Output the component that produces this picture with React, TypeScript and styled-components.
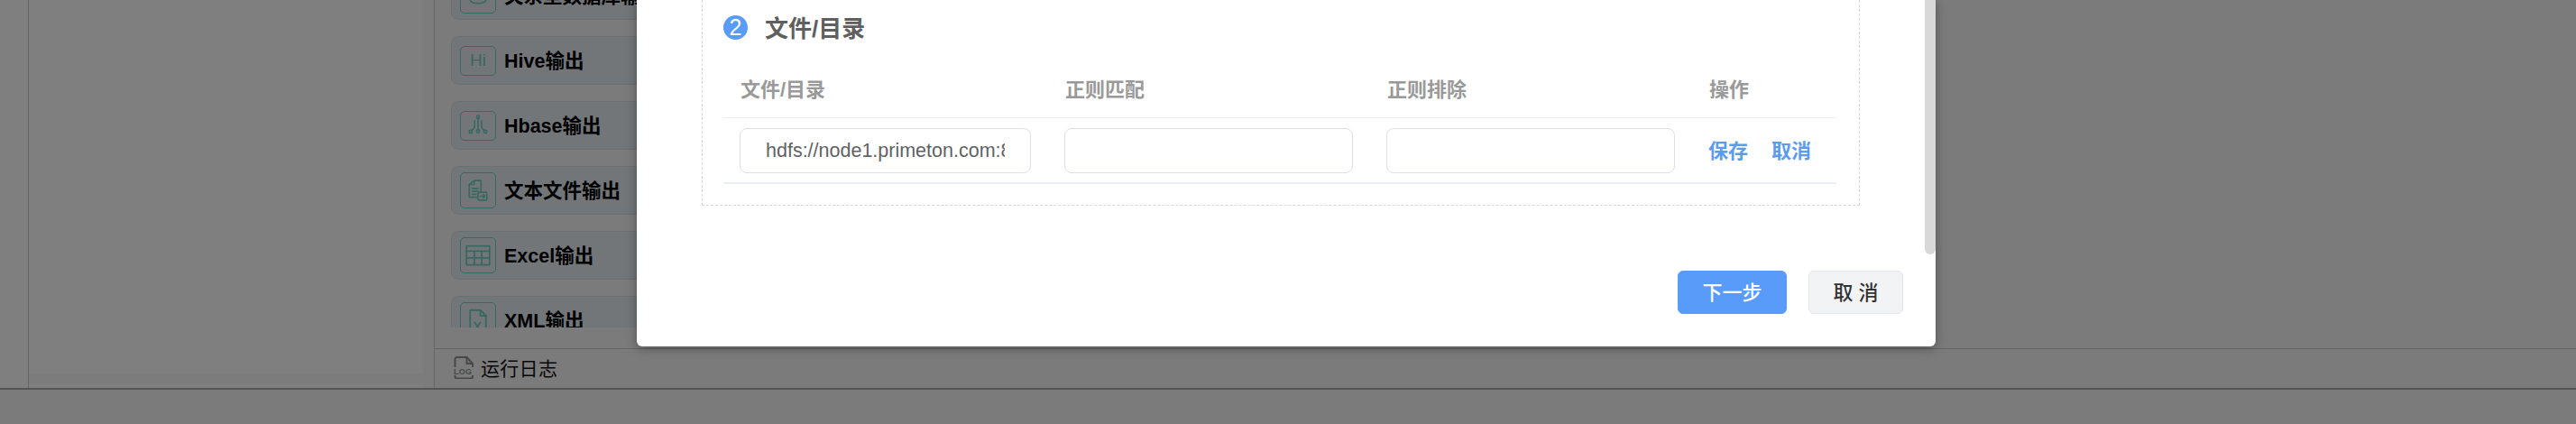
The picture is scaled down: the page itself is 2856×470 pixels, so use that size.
import React from 'react';
import styled, { createGlobalStyle } from 'styled-components';

const GlobalStyle = createGlobalStyle`
  html, body {
    margin: 0;
    padding: 0;
    background: #f6f6f6;
  }

  * {
    box-sizing: border-box;
  }
`;

const FONT = `"Liberation Sans", "Noto Sans CJK SC", sans-serif`;

const Page = styled.div`
  position: relative;
  width: 2856px;
  height: 470px;
  overflow: hidden;
  font-family: ${FONT};
  display: flex;
  flex-direction: column;
`;

const Workspace = styled.div`
  height: 432px;
  flex: none;
  display: flex;
  border-bottom: 2px solid #a8a8a8;
`;

const Rail = styled.div`
  width: 32px;
  background: #ffffff;
  border-right: 1px solid #c8c8c8;
`;

const TreePanel = styled.div`
  width: 449px;
  display: flex;
  flex-direction: column;
  background: #fefefe;
  border-right: 12px solid #f8f8f8;
  padding-top: 414px;
`;

const TreeFooter = styled.div`
  height: 12px;
  background: #f8f8f8;
`;

const Designer = styled.div`
  flex: 1;
  display: flex;
  flex-direction: column;
  background: #f6f6f8;
  border-left: 1px solid #cccccc;
`;

const NodeArea = styled.div`
  height: 386px;
  flex: none;
  padding-left: 18px;
`;

const NodeList = styled.div`
  height: 363px;
  overflow: hidden;
`;

const NodeStack = styled.div`
  margin-top: -32px;
  display: flex;
  flex-direction: column;
  gap: 18px;
`;

const NodeCard = styled.div`
  width: 400px;
  height: 54px;
  flex: none;
  display: flex;
  align-items: center;
  gap: 9px;
  padding-left: 9px;
  background: #e6edf3;
  border: 1px solid #dbe1e7;
  border-radius: 8px;
  color: #000;
  font-size: 21.5px;
  font-weight: 700;
  white-space: nowrap;
`;

const NodeName = styled.span`
  padding-bottom: 3px;
`;

const NodeIcon = styled.div<{ $short?: boolean }>`
  width: 40px;
  height: ${(p) => (p.$short ? '33px' : '40px')};
  flex: none;
  display: flex;
  align-items: center;
  justify-content: center;
  border: 1.5px solid #70d0c0;
  border-radius: 5px;
  color: #70d0c0;
  font-size: 19px;
  font-weight: 400;
`;

const LogBar = styled.div`
  flex: 1;
  display: flex;
  align-items: center;
  gap: 8px;
  padding-left: 21px;
  padding-bottom: 3px;
  border-top: 1px solid #c8c8c8;
  font-size: 21px;
  letter-spacing: 0.3px;
  color: #111;
`;

const BottomBar = styled.div`
  flex: 1;
  background: #f6f6f6;
`;

const Overlay = styled.div`
  position: absolute;
  inset: 0;
  background: rgba(0, 0, 0, 0.5);
`;

const Dialog = styled.div`
  position: absolute;
  left: 706px;
  top: 0;
  width: 1440px;
  height: 384px;
  background: #fff;
  border-radius: 0 0 6px 6px;
  box-shadow: 0 2px 12px rgba(0, 0, 0, 0.35);
  padding: 0 36px 0 72px;
`;

const ScrollThumb = styled.div`
  position: absolute;
  top: 0;
  right: 0;
  width: 12px;
  height: 282px;
  background: #d8d8d8;
  border-radius: 0 0 6px 6px;
`;

const Section = styled.div`
  width: 1284px;
  height: 228px;
  padding: 17px 25px 0 23px;
  border: 1px dashed #d4d7dc;
  border-top: none;
`;

const SectionTitle = styled.div`
  display: flex;
  align-items: center;
  gap: 19px;
  height: 27px;
  font-size: 26px;
  font-weight: 700;
  color: #5f5f5f;
`;

const TitleText = styled.span`
  padding-bottom: 2px;
`;

const StepBadge = styled.span`
  width: 27px;
  height: 27px;
  border-radius: 50%;
  background: #589bf9;
  color: #fff;
  font-size: 25px;
  font-weight: 400;
  display: flex;
  align-items: center;
  justify-content: center;
`;

const TableRow = styled.div<{ $head?: boolean }>`
  display: grid;
  grid-template-columns: 360px 357px 357px 161px;
  align-items: center;
  height: ${(p) => (p.$head ? '67px' : '73px')};
  margin-top: ${(p) => (p.$head ? '20px' : '0')};
  border-bottom: ${(p) => (p.$head ? '1px solid #ebeef5' : '2px solid #ebeef5')};
  padding-top: ${(p) => (p.$head ? '0' : '1px')};
`;

const HeadCell = styled.div`
  padding-left: 19px;
  padding-bottom: 1px;
  font-size: 22px;
  font-weight: 700;
  color: #999;
`;

const BodyCell = styled.div`
  padding: 0 19px 0 18px;
`;

const TextField = styled.div`
  height: 50px;
  padding: 0 28px;
  display: flex;
  align-items: center;
  border: 1px solid #dcdfe6;
  border-radius: 8px;
  background: #fff;
  overflow: hidden;
  font-size: 21.5px;
  color: #606266;
`;

const FieldValue = styled.span`
  display: block;
  overflow: hidden;
  white-space: nowrap;
`;

const Actions = styled.div`
  display: flex;
  gap: 26px;
  padding-left: 18px;
  padding-bottom: 5px;
  font-size: 22px;
  font-weight: 700;
  color: #5b9bf0;
`;

const DialogFooter = styled.div`
  display: flex;
  justify-content: flex-end;
  gap: 24px;
  margin-top: 72px;
`;

const Button = styled.div<{ $primary?: boolean }>`
  height: 48px;
  width: ${(p) => (p.$primary ? '121px' : '105px')};
  display: flex;
  align-items: center;
  justify-content: center;
  padding-bottom: 4px;
  border-radius: 6px;
  font-size: 22px;
  font-weight: 500;
  white-space: pre;
  color: ${(p) => (p.$primary ? '#fff' : '#333')};
  background: ${(p) => (p.$primary ? '#589bf9' : '#f2f3f5')};
  border: 1px solid ${(p) => (p.$primary ? '#589bf9' : '#e4e6ea')};
`;

const Glyph = ({ children, size = 26 }: { children: React.ReactNode; size?: number }) => (
  <svg width={size} height={size} viewBox="0 0 24 24" fill="none" stroke="currentColor" strokeWidth="1.5" strokeLinecap="round" strokeLinejoin="round">
    {children}
  </svg>
);

const nodes = [
  {
    name: '关系型数据库输出',
    icon: (
      <Glyph>
        <ellipse cx="12" cy="7" rx="8" ry="3" />
        <path d="M4 7v10c0 1.7 3.6 3 8 3s8-1.3 8-3V7" />
        <path d="M4 12c0 1.7 3.6 3 8 3s8-1.3 8-3" />
      </Glyph>
    ),
  },
  { name: 'Hive输出', short: true, icon: 'Hi' },
  {
    name: 'Hbase输出',
    short: true,
    icon: (
      <Glyph>
        <circle cx="12" cy="3.500" r="1.500" />
        <path d="M12 5v11" />
        <circle cx="12" cy="18" r="1.500" />
        <path d="M8.500 7.500v5c0 2.500-1 3.500-3 4.500" />
        <circle cx="4.500" cy="18.500" r="1.500" />
        <path d="M15.500 7.500v5c0 2.500 1 3.500 3 4.500" />
        <circle cx="19.500" cy="18.500" r="1.500" />
      </Glyph>
    ),
  },
  {
    name: '文本文件输出',
    icon: (
      <Glyph>
        <path d="M15 13V2H8L3 6v13h8" />
        <path d="M8 2v4H3" />
        <path d="M6 10h6M6 13h6M6 16h4" />
        <rect x="12" y="14" width="9" height="8" rx="1" />
        <path d="M14 18h5M17.500 16.500l1.500 1.500-1.500 1.500" />
      </Glyph>
    ),
  },
  {
    name: 'Excel输出',
    icon: (
      <Glyph size={28}>
        <rect x="1" y="3" width="22" height="18" />
        <path d="M1 8h22M1 14.500h22M8.500 8v13M15.500 8v13" />
      </Glyph>
    ),
  },
  {
    name: 'XML输出',
    icon: (
      <Glyph size={30}>
        <path d="M5 24V3h9l5 5v16" />
        <path d="M14 3v5h5" />
        <path d="M9 14l5 7M14 14l-5 7" />
      </Glyph>
    ),
  },
];

const columns = ['文件/目录', '正则匹配', '正则排除', '操作'];

const App = () => {
  const renderNodes = nodes.map((item) => (
    <NodeCard key={item.name}>
      <NodeIcon $short={item.short}>{item.icon}</NodeIcon>
      <NodeName>{item.name}</NodeName>
    </NodeCard>
  ));

  const renderHead = columns.map((item) => <HeadCell key={item}>{item}</HeadCell>);

  return (
    <Page>
      <GlobalStyle />
      <Workspace>
        <Rail />
        <TreePanel>
          <TreeFooter />
        </TreePanel>
        <Designer>
          <NodeArea>
            <NodeList>
              <NodeStack>{renderNodes}</NodeStack>
            </NodeList>
          </NodeArea>
          <LogBar>
            <svg width="22" height="25" viewBox="0 0 22 25" fill="none" stroke="#909090" strokeWidth="2" strokeLinejoin="round">
              <path d="M1.500 12V3a2 2 0 0 1 2-2h11l6.500 7v4M1.500 21v1.500a2 2 0 0 0 2 2h15.500a2 2 0 0 0 2-2V21" />
              <path d="M14.500 1v7h6.500" />
              <text x="0" y="20" fontSize="9" fontWeight="700" fontFamily="Liberation Sans" fill="#909090" stroke="none">LOG</text>
            </svg>
            运行日志
          </LogBar>
        </Designer>
      </Workspace>
      <BottomBar />
      <Overlay />
      <Dialog>
        <ScrollThumb />
        <Section>
          <SectionTitle>
            <StepBadge>2</StepBadge>
            <TitleText>文件/目录</TitleText>
          </SectionTitle>
          <TableRow $head>{renderHead}</TableRow>
          <TableRow>
            <BodyCell>
              <TextField>
                <FieldValue>hdfs://node1.primeton.com:8020/user/data</FieldValue>
              </TextField>
            </BodyCell>
            <BodyCell>
              <TextField />
            </BodyCell>
            <BodyCell>
              <TextField />
            </BodyCell>
            <Actions>
              <span>保存</span>
              <span>取消</span>
            </Actions>
          </TableRow>
        </Section>
        <DialogFooter>
          <Button $primary>下一步</Button>
          <Button>取 消</Button>
        </DialogFooter>
      </Dialog>
    </Page>
  );
};

export default App;
